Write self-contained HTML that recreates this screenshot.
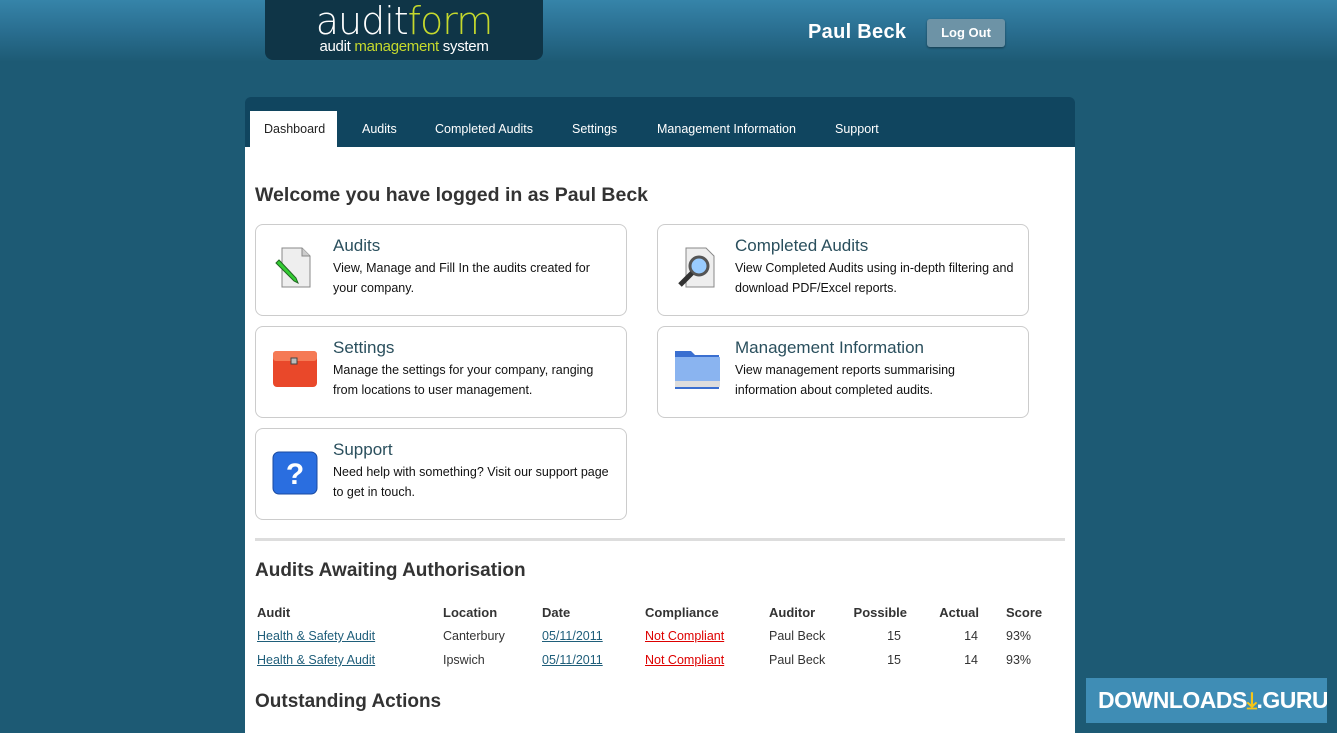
<!DOCTYPE html>
<html><head><style>
*{margin:0;padding:0;box-sizing:border-box}
html,body{width:1337px;height:733px;overflow:hidden}
body{background:linear-gradient(#3684a9 0px,#2a6f91 30px,#1d5a74 62px,#1d5a74 100%);font-family:"Liberation Sans",sans-serif;position:relative}
.logo{position:absolute;left:265px;top:0;width:278px;height:60px;background:#0f3547;border-radius:0 0 8px 8px;text-align:center}
.logo .a{font-family:"DejaVu Sans","Liberation Sans",sans-serif;font-size:38px;color:#fff;letter-spacing:-1px;line-height:42px;margin-top:0px;font-weight:300}
.logo .a span{color:#c5d92d}
.logo .b{font-size:15px;color:#fff;line-height:14px;margin-top:-2px;letter-spacing:-.3px}
.logo .b span{color:#c5d92d}
.user{position:absolute;left:808px;top:21px;font-size:20px;font-weight:bold;color:#fff;letter-spacing:.3px}
.btn{position:absolute;left:927px;top:19px;width:78px;height:28px;background:#6d93a6;border-radius:3px;color:#fff;font-size:13px;font-weight:bold;text-align:center;line-height:28px;box-shadow:0 1px 2px rgba(0,0,0,.4)}
.nav{position:absolute;left:245px;top:97px;width:830px;height:50px;background:#10455f;border-radius:6px 6px 0 0}
.nav div{position:absolute;top:14px;height:36px;font-size:12.5px;color:#fff;line-height:37px}
.nav .act{background:#fff;color:#222;padding:0 14px;left:5px;width:87px}
.main{position:absolute;left:245px;top:147px;width:830px;height:586px;background:#fff}
h1{position:absolute;left:10px;top:37px;font-size:19.5px;color:#333;font-weight:bold}
.card{position:absolute;width:372px;height:92px;border:1px solid #ccc;border-radius:8px}
.card h2{position:absolute;left:77px;top:11px;font-size:17px;font-weight:normal;color:#2a4f5d}
.card p{position:absolute;left:77px;top:33px;font-size:12.5px;line-height:20px;color:#111;width:282px}
.ic{position:absolute;left:16px;top:20px;width:46px;height:46px}
hr{position:absolute;left:10px;top:391px;width:810px;border:0;border-top:3px solid #ddd}
h3{position:absolute;left:10px;font-size:19px;font-weight:bold;color:#333}
table{position:absolute;left:10px;top:453px;border-collapse:collapse;font-size:12.5px;color:#333;table-layout:fixed}
td,th{height:24px;padding:0 2px;text-align:left;white-space:nowrap}
th{font-weight:bold;font-size:13px}
a{color:#1f5e7a}
a.r{color:#d00}
.dl{position:absolute;left:1086px;top:678px;width:241px;height:45px;background:#3f8db5;color:#fff;font-weight:bold;font-size:23px;line-height:45px;font-family:"Liberation Sans Narrow","Liberation Sans",sans-serif;padding-left:12px;white-space:nowrap;overflow:hidden;letter-spacing:-.5px}
</style></head><body>
<div class="logo"><div class="a">audit<span>form</span></div><div class="b">audit <span>management</span> system</div></div>
<div class="user">Paul Beck</div>
<div class="btn">Log Out</div>
<div class="nav">
<div class="act">Dashboard</div>
<div style="left:117px">Audits</div>
<div style="left:190px">Completed Audits</div>
<div style="left:327px">Settings</div>
<div style="left:412px">Management Information</div>
<div style="left:590px">Support</div>
</div>
<div class="main">
<h1>Welcome you have logged in as Paul Beck</h1>
<div class="card" style="left:10px;top:77px"><svg class="ic" viewBox="0 0 46 46"><path d="M10 3h20l8 8v31H10z" fill="#eee" stroke="#888"/><path d="M30 3v8h8" fill="#ccc" stroke="#888"/><path d="M4 18l18 18 4 2-2-5L7 15z" fill="#3c3" stroke="#262"/></svg><h2>Audits</h2><p>View, Manage and Fill In the audits created for your company.</p></div>
<div class="card" style="left:412px;top:77px"><svg class="ic" viewBox="0 0 46 46"><path d="M12 3h20l8 8v31H12z" fill="#eee" stroke="#888"/><circle cx="25" cy="21" r="9" fill="#9cf" stroke="#555" stroke-width="3"/><path d="M18 28l-12 12" stroke="#333" stroke-width="5"/></svg><h2>Completed Audits</h2><p>View Completed Audits using in-depth filtering and download PDF/Excel reports.</p></div>
<div class="card" style="left:10px;top:179px"><svg class="ic" viewBox="0 0 46 46"><rect x="1" y="4" width="44" height="36" rx="4" fill="#e9482a"/><rect x="1" y="4" width="44" height="10" rx="3" fill="#f57a55"/><rect x="19" y="11" width="6" height="6" fill="#bbb" stroke="#444"/></svg><h2>Settings</h2><p>Manage the settings for your company, ranging from locations to user management.</p></div>
<div class="card" style="left:412px;top:179px"><svg class="ic" viewBox="0 0 46 46"><path d="M1 4h16l4 4h24v34H1z" fill="#3a6fd0"/><rect x="1" y="10" width="45" height="28" fill="#8ab4f0"/><rect x="1" y="34" width="45" height="6" fill="#ddd"/></svg><h2>Management Information</h2><p>View management reports summarising information about completed audits.</p></div>
<div class="card" style="left:10px;top:281px"><svg class="ic" viewBox="0 0 46 46"><rect x="1" y="3" width="44" height="42" rx="6" fill="#2a6ee0" stroke="#1a4aa0"/><text x="23" y="35" font-size="30" font-weight="bold" fill="#fff" text-anchor="middle" font-family="Liberation Sans">?</text></svg><h2>Support</h2><p>Need help with something? Visit our support page to get in touch.</p></div>
<hr>
<h3 style="top:413px">Audits Awaiting Authorisation</h3>
<table>
<colgroup><col style="width:186px"><col style="width:99px"><col style="width:103px"><col style="width:124px"><col style="width:78px"><col style="width:64px"><col style="width:72px"><col style="width:70px"></colgroup>
<tr><th>Audit</th><th>Location</th><th>Date</th><th>Compliance</th><th>Auditor</th><th style="text-align:right">Possible</th><th style="text-align:right">Actual</th><th style="padding-left:25px">Score</th></tr>
<tr><td><a href="#">Health &amp; Safety Audit</a></td><td>Canterbury</td><td><a href="#">05/11/2011</a></td><td><a class="r" href="#">Not Compliant</a></td><td>Paul Beck</td><td style="text-align:right;padding-right:8px">15</td><td style="text-align:right;padding-right:3px">14</td><td style="padding-left:25px">93%</td></tr>
<tr><td><a href="#">Health &amp; Safety Audit</a></td><td>Ipswich</td><td><a href="#">05/11/2011</a></td><td><a class="r" href="#">Not Compliant</a></td><td>Paul Beck</td><td style="text-align:right;padding-right:8px">15</td><td style="text-align:right;padding-right:3px">14</td><td style="padding-left:25px">93%</td></tr>
</table>
<h3 style="top:544px">Outstanding Actions</h3>
</div>
<div class="dl">DOWNLOADS<span style="color:#f5c518">⤓</span>.GURU</div>
</body></html>
